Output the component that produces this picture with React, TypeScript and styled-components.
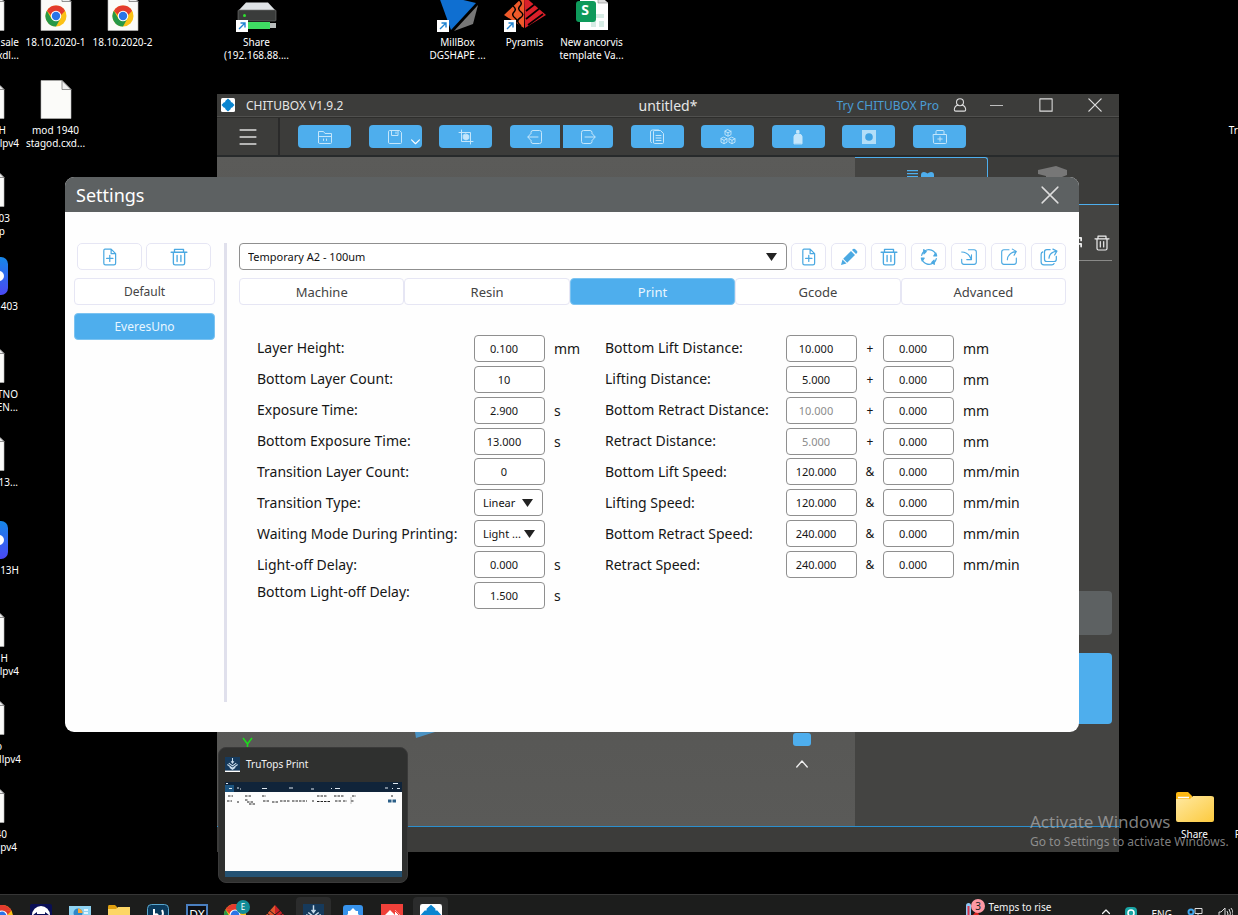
import React, { ReactNode } from 'react';
import styled, { createGlobalStyle, css } from 'styled-components';

const colors = {
  blue: '#4eaeed',
  chrome: '#3c3c3a',
  panel: '#444442',
  header: '#5d6162',
  line: '#2b8fce',
  outline: '#e6e6f4',
  field: '#8f8f8f',
};

const GlobalStyle = createGlobalStyle`
  * {
    box-sizing: border-box;
  }

  body {
    margin: 0;
    background: #000;
    font-family: 'Noto Sans', 'Open Sans', sans-serif;
    overflow: hidden;
  }

  button, input, select {
    margin: 0;
    font-family: inherit;
  }

  svg {
    display: block;
    flex: none;
  }
`;

/* Desktop */

const Screen = styled.div`
  display: flex;
  flex-direction: column;
  height: 100vh;
`;

const Desktop = styled.main`
  position: relative;
  flex: 1;
  overflow: hidden;
`;

const ShortcutGrid = styled.div`
  position: absolute;
  top: -8px;
  left: -45px;
  display: grid;
  grid-template-columns: repeat(20, 67px);
  grid-auto-rows: 88px;
`;

const Shortcut = styled.div<{ column: number; row: number }>`
  grid-column: ${p => p.column + 1};
  grid-row: ${p => p.row + 1};
  display: flex;
  flex-direction: column;
  align-items: center;
  gap: 4px;
  color: #fff;
  font-size: 10px;
  line-height: 13px;
  white-space: nowrap;
`;

const ShortcutLine = styled.div<{ inset?: number }>`
  ${p =>
    p.inset !== undefined &&
    css`
      align-self: flex-end;
      padding-right: ${p.inset}px;
    `}
`;

const ShortcutText = styled.div`
  align-self: stretch;
  display: flex;
  flex-direction: column;
  align-items: center;
`;

const Watermark = styled.div`
  position: absolute;
  right: 0;
  bottom: 43px;
  width: 208px;
  color: rgba(170, 170, 170, 0.75);
  font-size: 12px;
  line-height: 18px;
  white-space: nowrap;
`;

const WatermarkTitle = styled.div`
  font-size: 17px;
  line-height: 22px;
`;

/* Slicer window */

const AppWindow = styled.section`
  position: absolute;
  top: 94px;
  right: 119px;
  bottom: 42px;
  left: 217px;
  display: flex;
  flex-direction: column;
  background: ${colors.chrome};
`;

const TitleBar = styled.header`
  display: grid;
  grid-template-columns: 1fr auto 1fr;
  align-items: center;
  height: 23px;
  color: #e6e6e6;
  font-size: 14px;
  border-bottom: 1px solid #50504e;
`;

const Brand = styled.div`
  display: flex;
  align-items: center;
  gap: 11px;
  padding-left: 4px;
  font-size: 12px;
`;

const WindowControls = styled.div`
  display: flex;
  align-items: center;
  justify-content: flex-end;
`;

const ProLink = styled.a`
  margin-right: 9px;
  color: ${colors.blue};
  font-size: 12px;
  text-decoration: none;
  opacity: 0.85;
`;

const GhostButton = styled.button<{ width: number }>`
  display: flex;
  align-items: center;
  justify-content: center;
  width: ${p => p.width}px;
  height: 22px;
  padding: 0;
  color: #ddd;
  background: none;
  border: 0;
`;

const Toolbar = styled.nav`
  display: flex;
  height: 40px;
  border-top: 1px solid #2e2e2c;
  border-bottom: 2px solid #272a2b;
`;

const MenuCell = styled.div`
  display: flex;
  align-items: center;
  justify-content: center;
  width: 63px;
  border-right: 2px solid #2a2a2a;
`;

const ToolRow = styled.div`
  display: flex;
  flex: 1;
  align-items: center;
  justify-content: space-between;
  padding: 0 153px 0 18px;
`;

const ToolPair = styled.div`
  display: flex;
  gap: 3px;
`;

const ToolButton = styled.button<{ joined?: 'left' | 'right' }>`
  display: flex;
  position: relative;
  align-items: center;
  justify-content: center;
  width: ${p => (p.joined ? 50 : 53)}px;
  height: 23px;
  padding: 0;
  color: #c4e6fb;
  background: ${colors.blue};
  border: 0;
  border-radius: ${p =>
    p.joined === 'left' ? '4px 0 0 4px' : p.joined === 'right' ? '0 4px 4px 0' : '4px'};
`;

const MoreMark = styled.span`
  position: absolute;
  right: 2px;
  bottom: 2px;
  color: #fff;
`;

const Workspace = styled.div`
  display: flex;
  flex: 1;
  border-bottom: 1px solid ${colors.line};
`;

const Viewport = styled.div`
  position: relative;
  flex: 1;
  background: linear-gradient(#5b5b59, #525250 50%, #5a5a58);
`;

const AxisLabel = styled.span`
  position: absolute;
  bottom: 77px;
  left: 25px;
  color: #1ae01a;
`;

const PlateCorner = styled.span`
  position: absolute;
  bottom: 88px;
  left: 198px;
`;

const LayerSlider = styled.div`
  position: absolute;
  right: 44px;
  bottom: 56px;
  display: flex;
  flex-direction: column;
  align-items: center;
  gap: 12px;
  color: #eee;
`;

const SliderKnob = styled.div`
  width: 18px;
  height: 13px;
  background: ${colors.blue};
  border-radius: 3px;
`;

const SidePanel = styled.aside`
  display: flex;
  flex-direction: column;
  width: 264px;
  background: ${colors.panel};
`;

const PanelTabs = styled.div`
  display: flex;
  height: 48px;
`;

const PanelTab = styled.button<{ active?: boolean }>`
  display: flex;
  flex: 1;
  justify-content: center;
  padding: ${p => (p.active ? '12px' : '9px')} 0 0;
  color: ${p => (p.active ? colors.blue : '#777')};
  background: ${p => (p.active ? colors.panel : colors.chrome)};
  border: 0 solid ${colors.blue};
  border-width: ${p => (p.active ? '1px 1px 0 0' : '0 0 1px 0')};
  border-radius: ${p => (p.active ? '0 3px 0 0' : '0')};
`;

const ModelActions = styled.div`
  display: flex;
  align-items: center;
  justify-content: flex-end;
  gap: 12px;
  height: 56px;
  margin: 0 7px;
  padding: 20px 2px 0 0;
  color: #eee;
  border-bottom: 1px solid #8a8a88;
`;

const PanelFooter = styled.div`
  display: flex;
  flex: 1;
  flex-direction: column;
  justify-content: flex-end;
  gap: 18px;
  padding: 0 7px 102px;
`;

const PanelButton = styled.button<{ primary?: boolean }>`
  height: ${p => (p.primary ? 71 : 44)}px;
  background: ${p => (p.primary ? colors.blue : colors.header)};
  border: 0;
  border-radius: 4px;
`;

const StatusBar = styled.footer`
  height: 25px;
`;

/* Settings dialog */

const Dialog = styled.section`
  position: absolute;
  top: 177px;
  right: 159px;
  bottom: 162px;
  left: 65px;
  display: flex;
  flex-direction: column;
  overflow: hidden;
  background: #fefefe;
  border-radius: 9px;
`;

const DialogHeader = styled.header`
  display: flex;
  align-items: center;
  justify-content: space-between;
  height: 35px;
  padding: 0 16px 0 11px;
  color: #fff;
  background: ${colors.header};
`;

const DialogTitle = styled.h1`
  margin: 0;
  font-size: 18px;
  font-weight: 400;
  line-height: 24px;
`;

const DialogBody = styled.div`
  display: flex;
  flex: 1;
  gap: 9px;
  padding: 31px 13px 30px 9px;
`;

const Profiles = styled.div`
  width: 141px;
`;

const ProfileTools = styled.div`
  display: flex;
  gap: 4px;
  padding: 0 4px 0 3px;
`;

const OutlineButton = styled.button<{ fixed?: boolean }>`
  display: flex;
  flex: ${p => (p.fixed ? 'none' : 1)};
  align-items: center;
  justify-content: center;
  width: ${p => (p.fixed ? '35px' : 'auto')};
  height: 27px;
  padding: 0;
  color: #4ba9e2;
  background: #fff;
  border: 1px solid ${colors.outline};
  border-radius: 5px;
`;

const Choice = styled.button<{ active?: boolean }>`
  height: 27px;
  padding: 0;
  color: ${p => (p.active ? '#e8f6ff' : '#444')};
  font-size: 12px;
  background: ${p => (p.active ? colors.blue : '#fff')};
  border: 1px solid ${p => (p.active ? '#7cc3f1' : colors.outline)};
  border-radius: 4px;
`;

const ProfileList = styled.div`
  display: flex;
  flex-direction: column;
  gap: 8px;
  margin-top: 8px;
`;

const Divider = styled.div`
  width: 3px;
  background: #e0e0ec;
`;

const Main = styled.div`
  flex: 1;
  margin-left: 3px;
`;

const ResinRow = styled.div`
  display: flex;
  gap: 4px;
`;

const ResinTools = styled.div`
  display: flex;
  gap: 5px;
`;

const SelectBox = styled.div<{ inset: number }>`
  display: grid;
  flex: 1;
  align-items: center;
  color: #222;

  > * {
    grid-area: 1 / 1;
  }

  > svg {
    justify-self: end;
    margin-right: ${p => p.inset}px;
    pointer-events: none;
  }
`;

const Select = styled.select`
  width: 100%;
  height: 27px;
  padding: 0 8px;
  color: #111;
  font-size: 11px;
  background: #fff;
  border: 1px solid ${colors.field};
  border-radius: 4px;
  appearance: none;
`;

const Tabs = styled.div`
  display: flex;
  margin-top: 8px;

  ${Choice} {
    flex: 1;
    font-size: 13px;
  }
`;

const Form = styled.form`
  display: flex;
  margin-top: 28px;
  padding-left: 18px;
`;

const Fields = styled.div<{ labelWidth: number; width?: number }>`
  display: grid;
  grid-template-columns: ${p => p.labelWidth}px 1fr;
  grid-template-rows: repeat(9, 1fr);
  align-items: center;
  width: ${p => (p.width ? `${p.width}px` : 'auto')};
  height: 278px;
`;

const Label = styled.label<{ raised?: boolean }>`
  align-self: ${p => (p.raised ? 'start' : 'center')};
  color: #161616;
  font-size: 14px;
  line-height: 24px;
  white-space: nowrap;
`;

const Controls = styled.div`
  display: flex;
  align-items: center;
  color: #161616;
  font-size: 14px;
`;

const NumberInput = styled.input`
  width: 71px;
  height: 27px;
  padding: 0 11px 0 0;
  color: #161616;
  font-size: 11px;
  text-align: center;
  background: #fff;
  border: 1px solid ${colors.field};
  border-radius: 4px;

  &:disabled {
    color: #8c8c8c;
  }
`;

const SmallSelect = styled.div<{ wide?: boolean }>`
  display: flex;
  width: ${p => (p.wide ? 71 : 69)}px;
`;

const Operator = styled.span`
  width: 26px;
  font-size: 12px;
  text-align: center;
`;

const Unit = styled.span`
  margin-left: 9px;
`;

/* Taskbar */

const Preview = styled.aside`
  position: absolute;
  bottom: 11px;
  left: 218px;
  display: flex;
  flex-direction: column;
  width: 190px;
  height: 136px;
  padding: 0 5px 5px 6px;
  color: #f2f2f2;
  font-size: 10px;
  background: #2f302f;
  border: 1px solid #3a3a3a;
  border-radius: 8px;
`;

const PreviewTitle = styled.div`
  display: flex;
  flex: 1;
  align-items: center;
  gap: 6px;
  padding-bottom: 2px;
`;

const Taskbar = styled.footer`
  display: flex;
  height: 21px;
  overflow: hidden;
  color: #f4f4f4;
  font-size: 10px;
  background: #1c1d1c;
  border-top: 1px solid #363636;
`;

const TaskItems = styled.div`
  display: flex;
  flex: 1;
  margin-left: -18px;
`;

const TaskItem = styled.button<{ active?: boolean }>`
  display: flex;
  justify-content: center;
  width: 35px;
  height: 40px;
  margin: 2px 2px 0;
  padding: 7px 0 0;
  background: ${p => (p.active ? '#2b2c2c' : 'none')};
  border: 0;
  border-radius: 4px;
`;

const Weather = styled.div`
  display: flex;
  gap: 4px;
  width: 137px;
  line-height: 25px;
`;

const Tray = styled.div`
  display: flex;
  gap: 15px;
  padding: 12px 5px 0 0;
  line-height: 14px;
`;

/* Icons */

interface IconProps {
  size?: number;
  width?: number;
  children: ReactNode;
}

const Icon = ({ size = 16, width = 1, children }: IconProps) => (
  <svg
    width={size}
    height={size}
    viewBox="0 0 16 16"
    fill="none"
    stroke="currentColor"
    strokeWidth={width}
    strokeLinecap="round"
    strokeLinejoin="round"
  >
    {children}
  </svg>
);

const TrashIcon = ({ size = 18 }: { size?: number }) => (
  <Icon size={size} width={1.2}>
    <path d="M1 3.800h14M4 3.500V1.200h8v2.300M3 4v9.500Q3 15 4.500 15h7Q13 15 13 13.500V4M6.300 6.500v5.500M9.700 6.500v5.500" />
  </Icon>
);

const AddFileIcon = () => (
  <Icon size={18} width={1.1}>
    <path d="M3.500 1H9l4 4v8.500q0 1.500-1.500 1.500h-7.500q-1.500 0-1.500-1.500V2.500q0-1.500 1-1.500M9 1v4h4M7.800 6.500v5.500M5 9.300h5.600" />
  </Icon>
);

const PencilIcon = () => (
  <svg width="18" height="18" viewBox="0 0 18 18" fill="currentColor">
    <path d="M1 17l1.500-5.500 4 4zM3.200 10.800l7.800-7.800 4 4-7.800 7.800zM12 2l1-1q1-.7 2 0l2 2q.7 1 0 2l-1 1z" />
  </svg>
);

const SyncIcon = () => (
  <Icon size={18} width={1.1}>
    <path d="M4 2.800A6.500 6.500 0 0 1 14.300 6.500M12 13.200A6.500 6.500 0 0 1 1.700 9.500M1.500 6.500Q2 4.500 3 3.500M14.500 9.500Q14 11.500 13 12.500" />
    <path d="M3.300 1.500l2.200 1.700-2 2zM12.700 14.500l-2.200-1.700 2-2zM1.200 9h2.500L2 11.500zM14.800 7h-2.500L14 4.500z" fill="currentColor" />
  </Icon>
);

const ImportIcon = () => (
  <Icon size={18}>
    <path d="M7.500 1.500h5q2 0 2 2v9q0 2-2 2h-9q-2 0-2-2V10M1.500 3.500q6 0 8.500 6.500M10.200 6v4.300H6" />
  </Icon>
);

const ExportIcon = () => (
  <Icon size={18}>
    <path d="M8 1.500H3.500q-2 0-2 2v9q0 2 2 2h9q2 0 2-2V9M6.500 10.500Q7 4.500 14 3M11 1l3.500 2L12.500 6.500" />
  </Icon>
);

const ExportAllIcon = () => (
  <Icon size={18} width={1.1}>
    <path d="M9 1.500H6q-2 0-2 2V10q0 2 2 2h6.500q2 0 2-2V7.500M8 9q.5-5 6-6M11.500 1L15 2.800l-2 3.400M2.500 3.500Q1 4 1 5.500v7Q1 15 3.500 15h7q1.500 0 2-1.200" />
  </Icon>
);

const CloseIcon = ({ size }: { size: number }) => (
  <Icon size={size} width={size > 16 ? 1.3 : 1.5}>
    <path d="M1 1l14 14M15 1L1 15" />
  </Icon>
);

const Caret = () => (
  <svg width="11" height="8" viewBox="0 0 11 8" fill="currentColor">
    <path d="M0 0h11L5.500 8z" />
  </svg>
);

const ChituLogo = ({ size = 14 }: { size?: number }) => (
  <svg width={size} height={size} viewBox="0 0 14 14">
    <rect width="14" height="14" rx="1.500" fill="#fff" />
    <path d="M7 .5l2.800 2.500v1.200H11L13.500 7 11 9.800H9.800V11L7 13.500 4.200 11V9.800H3L.5 7 3 4.200h1.200V3z" fill="#0a85d0" />
  </svg>
);

const ChromeMark = ({ x, y, r }: { x: number; y: number; r: number }) => (
  <g transform={`translate(${x} ${y}) scale(${r / 10})`}>
    <circle r="10" fill="#fbc116" />
    <path d="M-8.700-5A10 10 0 0 1 8.700-5L0-4.500z" fill="#e33b2e" />
    <path d="M-8.700-5A10 10 0 0 0 0 10L4.500 2-4.300 2.500z" fill="#279847" />
    <path d="M-8.700-5H8.700L4 0H-4z" fill="#e33b2e" />
    <circle r="5" fill="#fff" />
    <circle r="4" fill="#2a74e8" />
  </g>
);

const FileIcon = ({ browser }: { browser?: boolean }) => (
  <svg width="32" height="40" viewBox="0 0 32 40">
    <path d="M1 .5h21l9 9v29H1z" fill="#fbfbf9" stroke="#bbb" strokeWidth=".6" />
    <path d="M22 .5v9h9z" fill="#eee" stroke="#777" strokeWidth=".8" />
    {browser && <ChromeMark x={16} y={24} r={10.500} />}
  </svg>
);

const TagIcon = () => (
  <svg width="40" height="40" viewBox="0 0 40 40">
    <defs>
      <linearGradient id="tag" x2="0" y2="1">
        <stop stopColor="#1687e8" />
        <stop offset="1" stopColor="#4a48f5" />
      </linearGradient>
    </defs>
    <rect y="1" width="39" height="38" rx="7" fill="url(#tag)" />
    <circle cx="30" cy="20" r="5" fill="#fff" />
  </svg>
);

const LinkBadge = ({ x }: { x: number }) => (
  <g transform={`translate(${x} 28)`}>
    <rect width="12" height="12" fill="#fff" />
    <path d="M3 9l5.500-5.500M4.500 3h4.500v4.500" stroke="#1f82d0" strokeWidth="1.400" fill="none" />
  </g>
);

const DriveIcon = () => (
  <svg width="42" height="40" viewBox="0 0 42 40">
    <path d="M3 18L10 10.500h22L39 18z" fill="#dfe3e6" />
    <rect x="2" y="18" width="38" height="11" rx="1" fill="#3a3c3b" stroke="#777" strokeWidth=".6" />
    <circle cx="8.500" cy="23.500" r="1.500" fill="#2fe02f" />
    <rect x="10" y="30" width="24" height="7" fill="#3fdc63" />
    <rect x="34" y="31" width="6" height="5" fill="#b9bdbd" />
    <LinkBadge x={0} />
  </svg>
);

const MillIcon = () => (
  <svg width="42" height="40" viewBox="0 0 42 40">
    <path d="M1 2l38 9-25 27z" fill="#0f6fd1" />
    <path d="M41 13l-5 19-19 7z" fill="#777" />
    <LinkBadge x={0} />
  </svg>
);

const PyramidIcon = () => (
  <svg width="42" height="40" viewBox="0 0 42 40">
    <path d="M20 4v32L0 23z" fill="#ef5a2a" />
    <path d="M20 4l22 19-21 13z" fill="#d9202a" />
    <path d="M22 19l9-7M22 27l14-11M24 33l15-11" stroke="#000" strokeWidth="1.600" />
    <path d="M15 8q4 3 1 6t1 6-1 6 1 8M9 14q4 3 1 6t1 6 0 5" stroke="#000" strokeWidth="1.500" fill="none" />
    <LinkBadge x={0} />
  </svg>
);

const SheetIcon = () => (
  <svg width="36" height="40" viewBox="0 0 36 40">
    <path d="M6 2h18l10 9v27H6z" fill="#fff" />
    <path d="M24 2v9h10" fill="#ddd" stroke="#888" strokeWidth=".6" />
    <path d="M17 22h13v4H17zM17 29h5v6h-5zM25 29h5v6h-5z" fill="#d7ece5" />
    <rect x="2" y="9" width="20" height="21" rx="3" fill="#0e9a5b" />
    <text x="11" y="22.500" fill="#fff" fontSize="14" fontWeight="700" textAnchor="middle">
      S
    </text>
  </svg>
);

const FolderIcon = ({ size = 40 }: { size?: number }) => (
  <svg width={size} height={size} viewBox="0 0 40 40">
    <defs>
      <linearGradient id="folder" x2="1" y2="1">
        <stop stopColor="#ffe9a2" />
        <stop offset="1" stopColor="#fcca3e" />
      </linearGradient>
    </defs>
    <path d="M1 10q0-2 2-2h10l4 4v8H1z" fill="#fdb813" />
    <path d="M1 15h14l3-3h18q3 0 3 2v22q0 2-2 2H3q-2 0-2-2z" fill="url(#folder)" />
    <path d="M3 13.500h11" stroke="#fff" strokeWidth="1.500" />
  </svg>
);

const FolderToolIcon = () => (
  <Icon>
    <path d="M1.500 13.500V2.500h5L8 4.500h6.500v9q0 1-1 1h-11q-1 0-1-1zM1.500 7.500h13M6.500 10v1.500M9.500 10v1.500" />
  </Icon>
);

const SaveIcon = () => (
  <Icon>
    <path d="M1.500 2.500q0-1 1-1h10l2 2v10q0 1-1 1h-11q-1 0-1-1zM4.500 1.500v5h6.500v-5M9 3v1.500" />
  </Icon>
);

const CropIcon = () => (
  <Icon>
    <path d="M3.500 1v11.500H15M1 3.500h11.500V15" />
    <path d="M8 5l2.800 1.400v3.200L8 11 5.200 9.600V6.400z" fill="currentColor" />
  </Icon>
);

const UndoIcon = () => (
  <Icon>
    <path d="M4 4.500v-1q0-2 2-2h6.500q2 0 2 2v9q0 2-2 2H6q-2 0-2-2v-1M11 8H1M3.500 5L.800 8l2.700 3" />
  </Icon>
);

const RedoIcon = () => (
  <Icon>
    <path d="M12 4.500v-1q0-2-2-2H3.500q-2 0-2 2v9q0 2 2 2H10q2 0 2-2v-1M5 8h10M12.500 5l2.700 3-2.700 3" />
  </Icon>
);

const CopyIcon = () => (
  <Icon>
    <path d="M4.500 2.500q0-1 1-1h6l3 3v9q0 1-1 1h-8q-1 0-1-1zM2.500 13.500q-1 0-1-1V3q0-2 2-2h6M7 6.500h5M7 9h5M7 11.500h5" />
  </Icon>
);

const CubesIcon = () => (
  <Icon width={0.9}>
    <path d="M8 .8l3 1.500v3.400L8 7.200 5 5.700V2.300zM5 2.300l3 1.500 3-1.500M8 3.800v3.400M4 8.300l3 1.500v3.400l-3 1.500-3-1.500V9.800zM1 9.800l3 1.500 3-1.500M4 11.300v3.400M12 8.300l3 1.500v3.400l-3 1.500-3-1.500V9.800zM9 9.800l3 1.500 3-1.500M12 11.300v3.400" />
  </Icon>
);

const BottleIcon = () => (
  <Icon>
    <path d="M7 1.500h2v2.500H7zM4 14.500V7.500q0-2 3-2.500h2q3 .5 3 2.500v7z" fill="currentColor" />
  </Icon>
);

const PlateIcon = () => (
  <svg width="14" height="14" viewBox="0 0 14 14">
    <path d="M0 0h14v14H0z" fill="#b2def8" />
    <circle cx="7" cy="7" r="3.800" fill="#3ea3e4" />
  </svg>
);

const KitIcon = () => (
  <Icon>
    <path d="M1.500 5.500h13v8q0 1-1 1h-11q-1 0-1-1zM4 5V2.500q0-1 1-1h6q1 0 1 1V5M8 7.800v4.400M5.800 10h4.400" />
  </Icon>
);

const TruTopsIcon = ({ size = 15 }: { size?: number }) => (
  <svg width={size} height={size} viewBox="0 0 16 16">
    <path d="M0 0h16v16H0z" fill="#163a5c" />
    <path d="M0 14.500h16V16H0z" fill="#fff" />
    <path
      d="M8 1v6M6.500 4.500L8 6.500l1.500-2M2.500 8L8 12l5.500-4M4 6.500L8 9.500l4-3M5 11l3 2.200L11 11"
      fill="none"
      stroke="#c9dcec"
      strokeWidth="1.100"
    />
  </svg>
);

const Thumbnail = () => (
  <svg width="100%" height="95" viewBox="0 0 177 95" preserveAspectRatio="none">
    <path d="M0 0h177v95H0z" fill="#fdfdfd" />
    <path d="M0 0h177v10H0z" fill="#10243a" />
    <path d="M0 3h9v7H0z" fill="#1d5580" />
    <path d="M0 89h177v6H0z" fill="#245273" />
    <path
      d="M4 6.500h3M12 6h2M15 7h1M37 6.500h5M64 6h4M86 7h3M106 6.500h1M110 6.500h5M160 6h3M167 6.500h1M172 6.500h3M168 1.500h5M1 1.500h2"
      stroke="#dfe8f0"
      strokeWidth="1.200"
    />
    <path
      d="M3 14h5M20 14h6M37 14h4M92 14h10M109 14h10M127 14h4M166 14h2M2 19h5M12 20h2M20 18h3M22 20h7M24 22h6M38 19h6M47 20h6M55 19h10M67 19h15M87 19h2M92 19.500h14M110 19h6M118 19h4M126 19h3"
      stroke="#222"
      strokeDasharray="2.500 1"
    />
    <path d="M163 17.500h3.500v3H163zM167.500 17.500h3.500v3h-3.500z" fill="#2b5f88" />
    <path d="M126 15v7" stroke="#999" strokeWidth=".6" />
  </svg>
);

/* Data */

type Edge = [string, number];

interface EdgeShortcut {
  row: number;
  tag?: boolean;
  lines: Edge[];
}

// Left column is mostly off screen, so each line carries its distance from the cell edge.
const edgeShortcuts: EdgeShortcut[] = [
  { row: 0, lines: [['sale', 3], ['xdl...', 3]] },
  { row: 1, lines: [['H', 16], ['lpv4', 3]] },
  { row: 2, lines: [['03', 12], ['p', 17]] },
  { row: 3, tag: true, lines: [['403', 4]] },
  { row: 4, lines: [['TNO', 4], ['EN...', 4]] },
  { row: 5, lines: [['13...', 4]] },
  { row: 6, tag: true, lines: [['13H', 3]] },
  { row: 7, lines: [['H', 14], ['lpv4', 3]] },
  { row: 8, lines: [['o', 20], ['llpv4', 1]] },
  { row: 9, lines: [['40', 15], ['pv4', 5]] },
];

const shortcuts = [
  { column: 1, row: 0, icon: <FileIcon browser />, lines: ['18.10.2020-1'] },
  { column: 2, row: 0, icon: <FileIcon browser />, lines: ['18.10.2020-2'] },
  { column: 4, row: 0, icon: <DriveIcon />, lines: ['Share', '(192.168.88....'] },
  { column: 7, row: 0, icon: <MillIcon />, lines: ['MillBox', 'DGSHAPE ...'] },
  { column: 8, row: 0, icon: <PyramidIcon />, lines: ['Pyramis'] },
  { column: 9, row: 0, icon: <SheetIcon />, lines: ['New ancorvis', 'template Va...'] },
  { column: 1, row: 1, icon: <FileIcon />, lines: ['mod 1940', 'stagod.cxd...'] },
  { column: 18, row: 9, icon: <FolderIcon />, lines: ['Share'] },
];

// Right column: only the first letters reach the visible area.
const cutShortcuts = [
  { row: 1, text: 'Tr', inset: 57 },
  { row: 9, text: 'F', inset: 55 },
];

interface Field {
  label: string;
  value: string;
  unit?: string;
  select?: boolean;
}

const exposureFields: Field[] = [
  { label: 'Layer Height:', value: '0.100', unit: 'mm' },
  { label: 'Bottom Layer Count:', value: '10' },
  { label: 'Exposure Time:', value: '2.900', unit: 's' },
  { label: 'Bottom Exposure Time:', value: '13.000', unit: 's' },
  { label: 'Transition Layer Count:', value: '0' },
  { label: 'Transition Type:', value: 'Linear', select: true },
  { label: 'Waiting Mode During Printing:', value: 'Light ...', select: true },
  { label: 'Light-off Delay:', value: '0.000', unit: 's' },
  { label: 'Bottom Light-off Delay:', value: '1.500', unit: 's' },
];

const liftFields = [
  { label: 'Bottom Lift Distance:', value: '10.000' },
  { label: 'Lifting Distance:', value: '5.000' },
  { label: 'Bottom Retract Distance:', value: '10.000', disabled: true },
  { label: 'Retract Distance:', value: '5.000', disabled: true },
  { label: 'Bottom Lift Speed:', value: '120.000', speed: true },
  { label: 'Lifting Speed:', value: '120.000', speed: true },
  { label: 'Bottom Retract Speed:', value: '240.000', speed: true },
  { label: 'Retract Speed:', value: '240.000', speed: true },
];

const tabs = ['Machine', 'Resin', 'Print', 'Gcode', 'Advanced'];

const DesktopIcons = () => (
  <ShortcutGrid>
    {edgeShortcuts.map(({ row, tag, lines }) => (
      <Shortcut key={row} column={0} row={row}>
        {tag ? <TagIcon /> : <FileIcon />}
        <ShortcutText>
          {lines.map(([text, inset]) => (
            <ShortcutLine key={text} inset={inset}>
              {text}
            </ShortcutLine>
          ))}
        </ShortcutText>
      </Shortcut>
    ))}
    {shortcuts.map(({ column, row, icon, lines }) => (
      <Shortcut key={`${column}-${row}`} column={column} row={row}>
        {icon}
        <ShortcutText>
          {lines.map(text => (
            <ShortcutLine key={text}>{text}</ShortcutLine>
          ))}
        </ShortcutText>
      </Shortcut>
    ))}
    {cutShortcuts.map(({ row, text, inset }) => (
      <Shortcut key={text} column={19} row={row}>
        <FileIcon />
        <ShortcutText>
          <ShortcutLine inset={inset}>{text}</ShortcutLine>
        </ShortcutText>
      </Shortcut>
    ))}
  </ShortcutGrid>
);

const SlicerWindow = () => (
  <AppWindow>
    <TitleBar>
      <Brand>
        <ChituLogo />
        CHITUBOX V1.9.2
      </Brand>
      <span>untitled*</span>
      <WindowControls>
        <ProLink href="#pro">Try CHITUBOX Pro</ProLink>
        <GhostButton width={24} aria-label="Account">
          <Icon size={14} width={1.2}>
            <circle cx="8" cy="4.800" r="4" />
            <path d="M5.500 8Q1.500 9.500 1.500 13.500q0 1.500 1.500 1.500h10q1.500 0 1.500-1.500Q14.500 9.500 10.500 8" />
          </Icon>
        </GhostButton>
        <GhostButton width={49} aria-label="Minimize">
          <Icon size={13}>
            <path d="M0 8h16" />
          </Icon>
        </GhostButton>
        <GhostButton width={49} aria-label="Maximize">
          <Icon size={14} width={1.2}>
            <path d="M1 1h14v14H1z" />
          </Icon>
        </GhostButton>
        <GhostButton width={49} aria-label="Close">
          <CloseIcon size={14} />
        </GhostButton>
      </WindowControls>
    </TitleBar>
    <Toolbar>
      <MenuCell>
        <GhostButton width={30} aria-label="Menu">
          <Icon size={18} width={1.3}>
            <path d="M1 1.800h14M1 8h14M1 14.200h14" />
          </Icon>
        </GhostButton>
      </MenuCell>
      <ToolRow>
        <ToolButton aria-label="Open">
          <FolderToolIcon />
        </ToolButton>
        <ToolButton aria-label="Save">
          <SaveIcon />
          <MoreMark>
            <Icon size={9} width={2}>
              <path d="M1 5l7 7 7-7" />
            </Icon>
          </MoreMark>
        </ToolButton>
        <ToolButton aria-label="Screenshot">
          <CropIcon />
        </ToolButton>
        <ToolPair>
          <ToolButton joined="left" aria-label="Undo">
            <UndoIcon />
          </ToolButton>
          <ToolButton joined="right" aria-label="Redo">
            <RedoIcon />
          </ToolButton>
        </ToolPair>
        <ToolButton aria-label="Copy">
          <CopyIcon />
        </ToolButton>
        <ToolButton aria-label="Auto layout">
          <CubesIcon />
        </ToolButton>
        <ToolButton aria-label="Hollow">
          <BottleIcon />
        </ToolButton>
        <ToolButton aria-label="Dig hole">
          <PlateIcon />
        </ToolButton>
        <ToolButton aria-label="Repair">
          <KitIcon />
        </ToolButton>
      </ToolRow>
    </Toolbar>
    <Workspace>
      <Viewport>
        <AxisLabel>
          <svg width="11" height="13" viewBox="0 0 11 13" fill="none" stroke="currentColor" strokeWidth="1.500">
            <path d="M1 2l4.500 6L10 2M5.500 8v5" />
          </svg>
        </AxisLabel>
        <PlateCorner>
          <svg width="20" height="6" viewBox="0 0 20 6">
            <path d="M0 0h20L1 6z" fill="#4b93c4" />
          </svg>
        </PlateCorner>
        <LayerSlider>
          <SliderKnob />
          <Icon size={12} width={1.8}>
            <path d="M1 12l7-8 7 8" />
          </Icon>
        </LayerSlider>
      </Viewport>
      <SidePanel>
        <PanelTabs>
          <PanelTab active aria-label="Model settings">
            <svg width="28" height="14" viewBox="0 0 28 14" fill="currentColor">
              <path d="M0 0h11v1.200H0zM0 3h11v1.200H0zM0 6h11v1.200H0zM14 5q0-3 3-3 2 0 3.500 1.500Q22 2 24 2q3 0 3 3v8H14z" />
            </svg>
          </PanelTab>
          <PanelTab aria-label="Tutorial">
            <svg width="30" height="18" viewBox="0 0 30 18" fill="currentColor">
              <path d="M0 4l18-4 11 4v5l-5 2v5H8v-6L0 8z" />
            </svg>
          </PanelTab>
        </PanelTabs>
        <ModelActions>
          <Icon size={14} width={2}>
            <path d="M13 2h2v3M13 9h2v3" />
          </Icon>
          <TrashIcon size={16} />
        </ModelActions>
        <PanelFooter>
          <PanelButton aria-label="Settings" />
          <PanelButton primary aria-label="Slice" />
        </PanelFooter>
      </SidePanel>
    </Workspace>
    <StatusBar />
  </AppWindow>
);

const SettingsDialog = () => (
  <Dialog role="dialog" aria-labelledby="settings-title">
    <DialogHeader>
      <DialogTitle id="settings-title">Settings</DialogTitle>
      <GhostButton width={26} aria-label="Close settings">
        <CloseIcon size={18} />
      </GhostButton>
    </DialogHeader>
    <DialogBody>
      <Profiles>
        <ProfileTools>
          <OutlineButton aria-label="Add machine">
            <AddFileIcon />
          </OutlineButton>
          <OutlineButton aria-label="Delete machine">
            <TrashIcon />
          </OutlineButton>
        </ProfileTools>
        <ProfileList>
          <Choice>Default</Choice>
          <Choice active>EveresUno</Choice>
        </ProfileList>
      </Profiles>
      <Divider />
      <Main>
        <ResinRow>
          <SelectBox inset={10}>
            <Select aria-label="Resin profile">
              <option>Temporary A2 - 100um</option>
            </Select>
            <Caret />
          </SelectBox>
          <ResinTools>
            <OutlineButton fixed aria-label="Add profile">
              <AddFileIcon />
            </OutlineButton>
            <OutlineButton fixed aria-label="Rename profile">
              <PencilIcon />
            </OutlineButton>
            <OutlineButton fixed aria-label="Delete profile">
              <TrashIcon />
            </OutlineButton>
            <OutlineButton fixed aria-label="Reset profile">
              <SyncIcon />
            </OutlineButton>
            <OutlineButton fixed aria-label="Import profile">
              <ImportIcon />
            </OutlineButton>
            <OutlineButton fixed aria-label="Export profile">
              <ExportIcon />
            </OutlineButton>
            <OutlineButton fixed aria-label="Export all profiles">
              <ExportAllIcon />
            </OutlineButton>
          </ResinTools>
        </ResinRow>
        <Tabs>
          {tabs.map(tab => (
            <Choice key={tab} active={tab === 'Print'}>
              {tab}
            </Choice>
          ))}
        </Tabs>
        <Form>
          <Fields labelWidth={217} width={348}>
            {exposureFields.map(({ label, value, unit, select }, index) => (
              <React.Fragment key={label}>
                <Label htmlFor={`exposure-${index}`} raised={index === 8}>
                  {label}
                </Label>
                <Controls>
                  {select ? (
                    <SmallSelect wide={index === 6}>
                      <SelectBox inset={10}>
                        <Select id={`exposure-${index}`}>
                          <option>{value}</option>
                        </Select>
                        <Caret />
                      </SelectBox>
                    </SmallSelect>
                  ) : (
                    <NumberInput id={`exposure-${index}`} defaultValue={value} />
                  )}
                  {unit && <Unit>{unit}</Unit>}
                </Controls>
              </React.Fragment>
            ))}
          </Fields>
          <Fields labelWidth={181}>
            {liftFields.map(({ label, value, disabled, speed }, index) => (
              <React.Fragment key={label}>
                <Label htmlFor={`lift-${index}`}>{label}</Label>
                <Controls>
                  <NumberInput id={`lift-${index}`} defaultValue={value} disabled={disabled} />
                  <Operator>{speed ? '&' : '+'}</Operator>
                  <NumberInput aria-label={`${label} second stage`} defaultValue="0.000" />
                  <Unit>{speed ? 'mm/min' : 'mm'}</Unit>
                </Controls>
              </React.Fragment>
            ))}
          </Fields>
        </Form>
      </Main>
    </DialogBody>
  </Dialog>
);

const WindowsTaskbar = () => (
  <Taskbar>
    <TaskItems>
      <TaskItem aria-label="Chrome">
        <svg width="24" height="24" viewBox="0 0 24 24">
          <ChromeMark x={12} y={12} r={11} />
        </svg>
      </TaskItem>
      <TaskItem aria-label="TeamViewer">
        <svg width="22" height="22" viewBox="0 0 22 22">
          <rect width="22" height="22" rx="2" fill="#0a0f55" />
          <circle cx="11" cy="11" r="9" fill="#fff" />
          <path d="M3 11l4-3v2h8V8l4 3-4 3v-2H7v2z" fill="#0a0f55" />
        </svg>
      </TaskItem>
      <TaskItem aria-label="Monitor">
        <svg width="22" height="22" viewBox="0 0 22 22">
          <path d="M0 2h22v18H0z" fill="#8fd3f2" />
          <circle cx="9" cy="9" r="4.500" fill="#2d87c8" />
          <path d="M9 9V4.500A4.500 4.500 0 0 1 13.500 9z" fill="#f7a531" />
          <path d="M15 6h4M15 9h4" stroke="#fff" strokeWidth="1.500" />
        </svg>
      </TaskItem>
      <TaskItem aria-label="Explorer">
        <svg width="22" height="22" viewBox="0 0 22 22">
          <path d="M0 3q0-2 1-2h6l2 2v5H0z" fill="#e0a010" />
          <path d="M0 5h8l2-2h12v17H0z" fill="#fdd665" />
        </svg>
      </TaskItem>
      <TaskItem aria-label="Scanner">
        <svg width="22" height="22" viewBox="0 0 22 22">
          <rect x=".5" y=".5" width="21" height="21" rx="4" fill="#0b3a5c" stroke="#5aa8d0" />
          <path d="M7 5v6q4-2 4 2M15 6q3 6-4 9" stroke="#fff" strokeWidth="2" fill="none" />
        </svg>
      </TaskItem>
      <TaskItem aria-label="DX">
        <svg width="22" height="22" viewBox="0 0 22 22">
          <rect x="1" y="1" width="20" height="20" fill="#0d0f14" stroke="#4a7fc0" strokeWidth="2" />
          <text x="11" y="15" fill="#fff" fontSize="12" textAnchor="middle">
            DX
          </text>
        </svg>
      </TaskItem>
      <TaskItem aria-label="Chrome profile">
        <svg width="26" height="26" viewBox="0 0 26 26" overflow="visible">
          <ChromeMark x={12} y={11} r={11} />
          <circle cx="20" cy="3" r="7" fill="#128c98" />
          <text x="20" y="6" fill="#fff" fontSize="8" textAnchor="middle">
            E
          </text>
        </svg>
      </TaskItem>
      <TaskItem aria-label="Pyramis">
        <svg width="20" height="22" viewBox="0 0 20 22">
          <path d="M10 1v18L1 11z" fill="#e2562d" />
          <path d="M10 1l9 10-9 8z" fill="#c81f26" />
          <path d="M2 9l6 5M4 6l6 5 6-5M18 9l-6 5" stroke="#1c1d1c" fill="none" />
        </svg>
      </TaskItem>
      <TaskItem active aria-label="TruTops Print">
        <TruTopsIcon size={21} />
      </TaskItem>
      <TaskItem aria-label="Printer">
        <svg width="20" height="22" viewBox="0 0 20 22">
          <rect y="1" width="20" height="20" rx="3" fill="#3793ec" />
          <path d="M10 4l3 3h2v3l3 3H2l3-3V7h2z" fill="#fff" />
        </svg>
      </TaskItem>
      <TaskItem aria-label="AnyDesk">
        <svg width="22" height="22" viewBox="0 0 22 22">
          <path d="M0 0h22v22H0z" fill="#f0413a" />
          <path d="M9 6l6 6-6 6-6-6zM14 6l6 6-6 6" fill="#fff" />
          <path d="M13 6l6 6" stroke="#f0413a" />
        </svg>
      </TaskItem>
      <TaskItem active aria-label="CHITUBOX">
        <ChituLogo size={22} />
      </TaskItem>
    </TaskItems>
    <Weather>
      <svg width="20" height="22" viewBox="0 0 20 22">
        <rect x="1" y="8" width="5" height="14" rx="2.500" fill="#8fc7f5" />
        <path d="M3.500 11v11" stroke="#d8344a" strokeWidth="2" />
        <path d="M8 20l4-5 2 5z" fill="#d8231f" />
        <circle cx="13" cy="11" r="7" fill="#ff99a4" />
        <text x="13" y="15" fill="#222" fontSize="10" textAnchor="middle">
          3
        </text>
      </svg>
      Temps to rise
    </Weather>
    <Tray>
      <Icon size={8} width={2.5}>
        <path d="M1 13l7-7 7 7" />
      </Icon>
      <svg width="12" height="14" viewBox="0 0 12 14">
        <rect width="12" height="14" rx="4" fill="#19a4a4" />
        <circle cx="6" cy="6" r="3" fill="none" stroke="#fff" strokeWidth="1.500" />
      </svg>
      <span>ENG</span>
      <svg width="16" height="14" viewBox="0 0 16 14" fill="none" stroke="#ddd">
        <path d="M8 1.500h7v5H8zM11 7v5" />
        <circle cx="4" cy="5" r="2.500" stroke="#3ea5ec" strokeWidth="2" />
      </svg>
      <svg width="15" height="14" viewBox="0 0 15 14" fill="none" stroke="#ddd">
        <path d="M1 5h2l4-4v11L3 9H1zM9 4q2 3 0 6M11 2q3 4 0 9M13 1q4 5 0 11" />
      </svg>
    </Tray>
  </Taskbar>
);

const App = () => (
  <>
    <GlobalStyle />
    <Screen>
      <Desktop>
        <SlicerWindow />
        <DesktopIcons />
        <SettingsDialog />
        <Watermark>
          <WatermarkTitle>Activate Windows</WatermarkTitle>
          Go to Settings to activate Windows.
        </Watermark>
        <Preview>
          <PreviewTitle>
            <TruTopsIcon />
            TruTops Print
          </PreviewTitle>
          <Thumbnail />
        </Preview>
      </Desktop>
      <WindowsTaskbar />
    </Screen>
  </>
);

export default App;
